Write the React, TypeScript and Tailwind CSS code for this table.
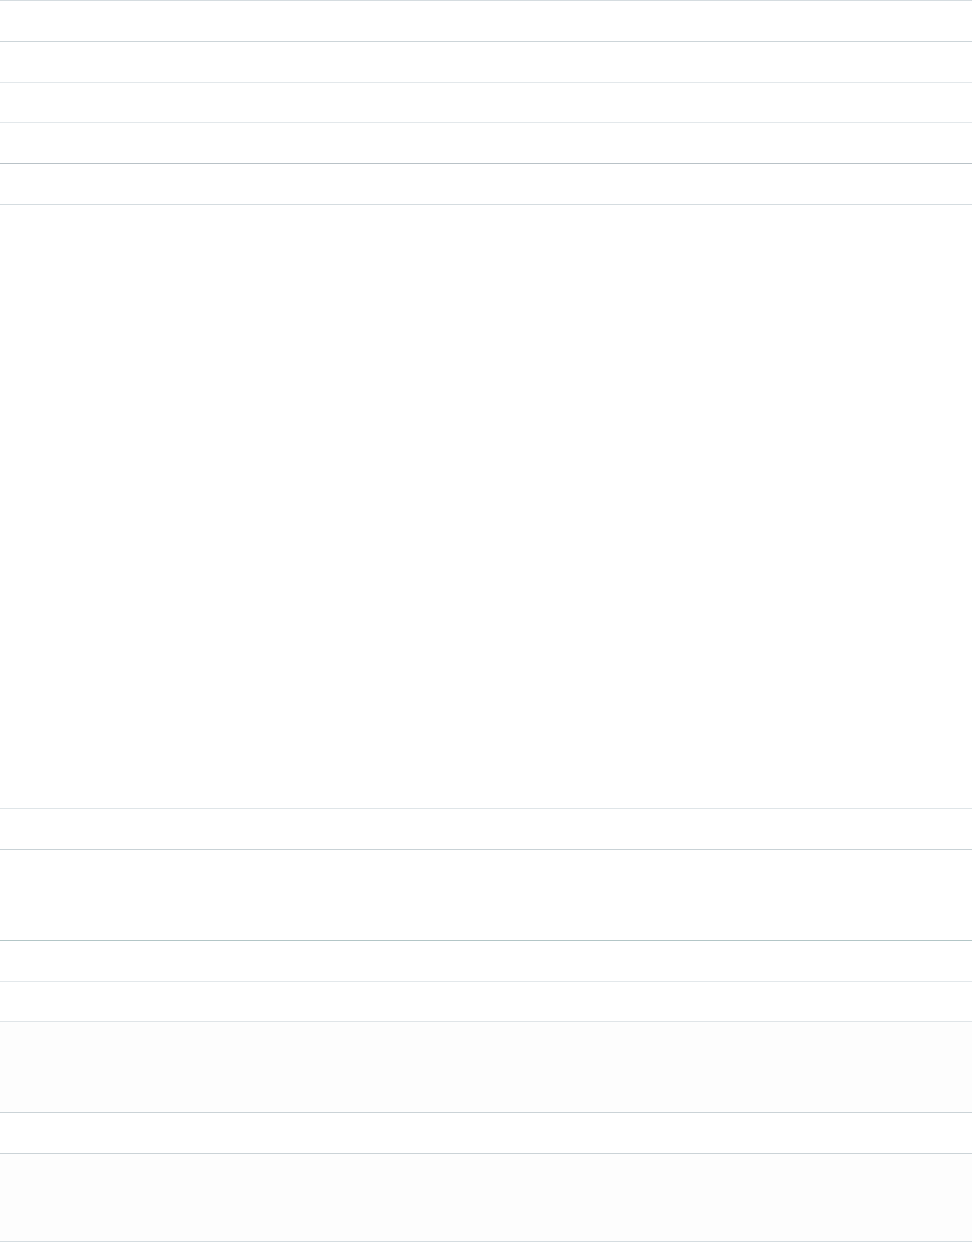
const rows: { h: string; line: string; bg?: string }[] = [
  { h: 'h-[41px]', line: 'border-[#d5dce0]' },
  { h: 'h-[41px]', line: 'border-[#cdd5d9]' },
  { h: 'h-[40px]', line: 'border-[#e3e8eb]' },
  { h: 'h-[41px]', line: 'border-[#e3e8eb]' },
  { h: 'h-[41px]', line: 'border-[#b9c2c7]' },
  { h: 'h-[604px]', line: 'border-[#d5dce0]' },
  { h: 'h-[41px]', line: 'border-[#dfe5e8]' },
  { h: 'h-[91px]', line: 'border-[#c9d2d6]' },
  { h: 'h-[41px]', line: 'border-[#b3c6c7]' },
  { h: 'h-[40px]', line: 'border-[#e3e8eb]' },
  { h: 'h-[91px]', line: 'border-[#e0e5e8]', bg: 'bg-[#fdfdfd]' },
  { h: 'h-[41px]', line: 'border-[#cbd3d7]' },
  { h: 'h-[88px]', line: 'border-[#cbd3d7]', bg: 'bg-[#fdfdfd]' },
];

export default function App() {
  return (
    <div className="min-h-screen bg-white">
      <div className="w-[972px]">
        {rows.map((row, i) => (
          <div
            key={i}
            className={`box-border border-t ${row.h} ${row.line} ${row.bg ?? 'bg-white'}`}
          />
        ))}
        <div className="border-t border-[#d5dce0]" />
      </div>
    </div>
  );
}
